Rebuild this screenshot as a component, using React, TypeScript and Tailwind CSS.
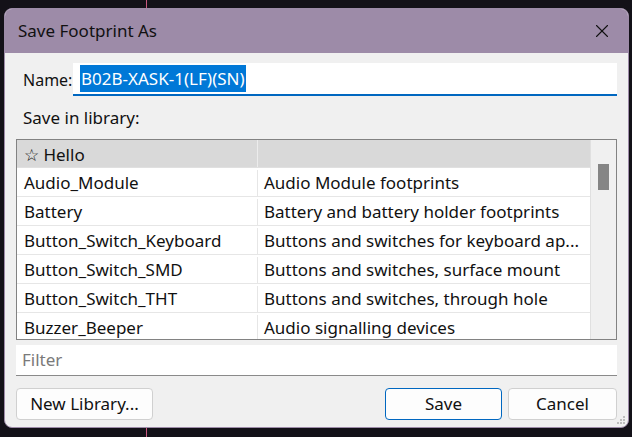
import { X } from "lucide-react"

const rows = [
  { name: "Audio_Module", desc: "Audio Module footprints" },
  { name: "Battery", desc: "Battery and battery holder footprints" },
  { name: "Button_Switch_Keyboard", desc: "Buttons and switches for keyboard ap..." },
  { name: "Button_Switch_SMD", desc: "Buttons and switches, surface mount" },
  { name: "Button_Switch_THT", desc: "Buttons and switches, through hole" },
  { name: "Buzzer_Beeper", desc: "Audio signalling devices" },
]

export default function App() {
  return (
    <div
      className="w-[632px] h-[437px] bg-[#131118] relative overflow-hidden text-[#111]"
      style={{ fontFamily: "'Noto Sans', 'Open Sans', sans-serif" }}
    >
      {/* background line */}
      <div className="absolute left-[146px] top-0 h-full w-px bg-[#c8587f]" />

      <div className="absolute left-[4px] top-[8px] w-[625px] h-[420px] rounded-[8px] overflow-hidden bg-[#f0f0f0] border border-[#9d8ba8] flex flex-col">
        {/* title bar */}
        <div className="h-[44px] bg-[#9d8ba8] flex items-center justify-between pl-[13px] pr-[15px] shrink-0">
          <span className="text-[17px] text-[#111]">Save Footprint As</span>
          <X className="w-[22px] h-[22px]" strokeWidth={1.2} />
        </div>

        <div className="flex flex-col px-[11px] pt-[10px]">
          {/* name row */}
          <div className="flex items-center pl-[7px]">
            <span className="text-[16px] w-[50px]">Name:</span>
            <div className="flex-1 h-[33px] bg-white border-b-2 border-[#0067c0] flex items-center pl-[7px]">
              <span className="bg-[#0078d7] text-white text-[17px] leading-[27px] px-[1px]">B02B-XASK-1(LF)(SN)</span>
            </div>
          </div>

          <div className="pl-[7px] mt-[11px] text-[17px] leading-[22px]">Save in library:</div>

          {/* table */}
          <div className="mt-[10px] h-[201px] border border-[#828282] bg-white flex overflow-hidden">
            <div className="flex-1 flex flex-col">
              <div className="h-[28px] bg-[#d9d9d9] flex shrink-0 border-b border-[#e0e0e0]">
                <div className="w-[241px] border-r border-[#ececec] flex items-center pl-[7px] pt-[2px] text-[17px]">☆ Hello</div>
                <div className="flex-1" />
              </div>
              {rows.map((r) => (
                <div key={r.name} className="h-[29px] flex shrink-0 border-b border-[#e6e6e6] text-[17px] pt-[2px]">
                  <div className="w-[241px] border-r border-[#e6e6e6] flex items-center pl-[7px]">{r.name}</div>
                  <div className="flex-1 flex items-center pl-[6px] whitespace-nowrap overflow-hidden">{r.desc}</div>
                </div>
              ))}
            </div>
            <div className="w-[26px] bg-[#f0f0f0] border-l border-[#e0e0e0] pt-[24px] flex justify-center">
              <div className="w-[11px] h-[26px] bg-[#858585]" />
            </div>
          </div>

          {/* filter */}
          <div className="mt-[5px] h-[31px] bg-white border-b border-[#8a8a8a] flex items-center pl-[6px] text-[17px] text-[#7a7a7a]">
            Filter
          </div>

          {/* buttons */}
          <div className="mt-[12px] flex items-center">
            <button className="w-[137px] h-[32px] bg-[#fdfdfd] border border-[#d0d0d0] rounded-[4px] text-[17px]">
              New Library...
            </button>
            <div className="flex-1" />
            <button className="w-[117px] h-[32px] bg-[#fdfdfd] border border-[#0067c0] rounded-[4px] text-[17px]">
              Save
            </button>
            <button className="ml-[6px] w-[109px] h-[32px] bg-[#fdfdfd] border border-[#d0d0d0] rounded-[4px] text-[17px]">
              Cancel
            </button>
          </div>
        </div>

        {/* resize grip */}
        <svg className="absolute right-[2px] bottom-[2px]" width="10" height="10" viewBox="0 0 10 10">
          <rect x="7" y="1" width="2" height="2" fill="#bdbdbd" />
          <rect x="4" y="4" width="2" height="2" fill="#bdbdbd" />
          <rect x="7" y="4" width="2" height="2" fill="#bdbdbd" />
          <rect x="1" y="7" width="2" height="2" fill="#bdbdbd" />
          <rect x="4" y="7" width="2" height="2" fill="#bdbdbd" />
          <rect x="7" y="7" width="2" height="2" fill="#bdbdbd" />
        </svg>
      </div>
    </div>
  )
}
